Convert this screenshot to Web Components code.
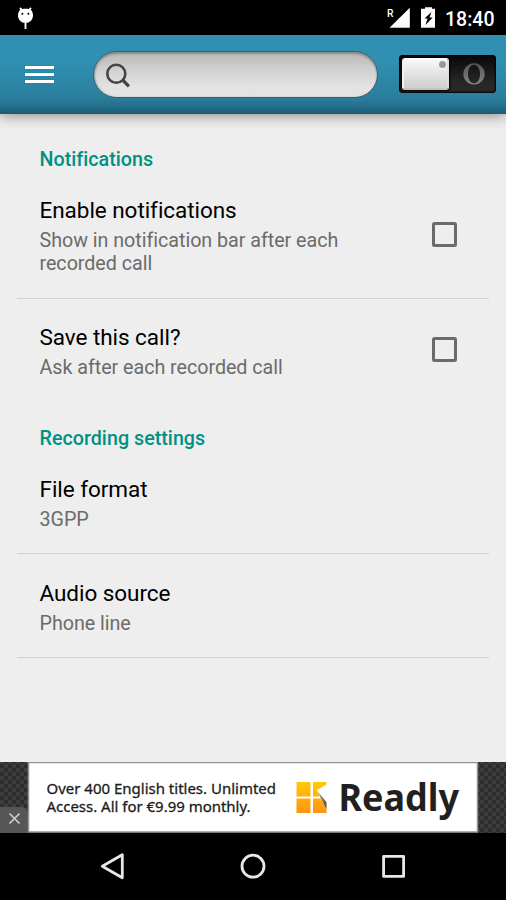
<!DOCTYPE html>
<html lang="en">
<head>
<meta charset="utf-8">
<title>Call recorder settings</title>
<style>
html,body{margin:0;padding:0;height:100%;overflow:hidden;background:#eee;font-family:Roboto,"Noto Sans",sans-serif}
</style>
</head>
<body>
<settings-screen></settings-screen>
<script>
function define(name, html) {
  const t = document.createElement('template');
  t.innerHTML = html;
  customElements.define(name, class extends HTMLElement {
    constructor() {
      super();
      this.attachShadow({mode: 'open'}).append(t.content.cloneNode(true));
    }
  });
}

define('status-bar', `
<style>
:host{display:flex;box-sizing:border-box;height:35px;padding:0 4px 0 16px;background:#000;color:#fff;justify-content:space-between;flex:none}
.right{display:flex}
svg{display:block}
</style>
<svg width="20" height="35" viewBox="16 0 20 35" fill="#fff">
  <path d="M20 8l2.200 2.400M31 8l-2.200 2.400M25.500 23v6" stroke="#fff" stroke-width="1.900" fill="none"/>
  <path d="M18 15.500C18 10 21 8.700 25.500 8.700S33 10 33 15.500C33 20 29.500 23 25.500 23S18 20 18 15.500z"/>
  <circle cx="22.400" cy="13.700" r="1" fill="#000"/><circle cx="28.400" cy="13.700" r="1" fill="#000"/>
</svg>
<div class="right">
<svg width="120" height="35" viewBox="382 0 120 35" fill="#fff">
  <text x="387" y="16.800" font-family="Roboto,sans-serif" font-size="11.500" font-weight="500" textLength="6.500" lengthAdjust="spacingAndGlyphs">R</text>
  <path d="M389.500 27.700L409.800 7.800V27.700z"/>
  <path d="M425 7.200h7v1.600h3v18.900h-14V8.800h4z"/>
  <path d="M431.500 12l-7 6.500h3l-2 6.500 7.200-7.500h-3.200z" fill="#000"/>
  <text x="445" y="25.500" font-family="Roboto,sans-serif" font-size="20" font-weight="500" textLength="49.500" lengthAdjust="spacingAndGlyphs">18:40</text>
</svg>
</div>`);

define('search-field', `
<style>
:host{display:flex;align-items:center;box-sizing:border-box;width:285px;height:47px;border-radius:24px;border:1.500px solid #3f5e6b;
background:linear-gradient(#b8b8b8,#d0d0d0 38%,#e2e2e2 75%,#e4e4e4);box-shadow:inset 0 2px 2px #6668,inset 1px 0 2px #6665}
svg{display:block;margin-left:10px}
</style>
<svg width="28" height="28" viewBox="0 0 28 28" fill="none" stroke="#444"><circle cx="12.300" cy="12.700" r="9" stroke-width="2.600"/><path d="M18.600 19l6.300 6.300" stroke-width="3.200"/></svg>`);

define('power-switch', `
<style>
:host{display:flex;box-sizing:border-box;width:97px;height:38px;padding:3px;border-radius:4px;background:linear-gradient(#080808,#262626 70%,#292929);box-shadow:inset 0 0 2px 1px #000}
.thumb{box-sizing:border-box;width:47px;height:32px;border:2px solid;border-color:#fff #dedede #c5c5c5 #f2f2f2;border-radius:3px;background:linear-gradient(#f7f7f7,#cfcfcf);display:flex;justify-content:flex-end;box-shadow:0 0 2px 1px #000}
.dot{width:7px;height:7px;border-radius:50%;background:#9b9797;margin:1px 1px 0 0;box-shadow:0 0 0 1px #f4f4f4}
svg{display:block;margin-left:14px}
</style>
<div class="thumb"><div class="dot"></div></div>
<svg width="23" height="32" viewBox="0 0 23 32"><defs><linearGradient id="g" x2="0" y2="1"><stop stop-color="#555"/><stop offset="1" stop-color="#858585"/></linearGradient></defs><path fill="url(#g)" fill-rule="evenodd" d="M11 5.200a10.700 10.700 0 1 0 .01 0zM11 6.700c8 0 8 18.600 0 18.600s-8-18.600 0-18.600z"/></svg>`);

define('app-bar', `
<style>
:host{display:flex;flex:none;box-sizing:border-box;height:78.500px;padding:0 10px 0 25px;
background:linear-gradient(#318fb1,#318fb1 35%,#2a7e9c 80%,#266f8c 90%,#17637c 97%,#35505c);box-shadow:0 1px 13px #0007;position:relative}
.menu{width:30px;height:18px;margin-top:31px;display:flex;flex-direction:column;gap:4px}
.menu i{height:3px;width:29px;background:#fff;box-shadow:0 0 0 1px #1785a655}
search-field{margin:16px 0 0 38px}
power-switch{margin:20px 0 0 auto}
</style>
<div class="menu"><i></i><i></i><i></i></div><search-field></search-field><power-switch></power-switch>`);

define('pref-category', `
<style>
:host{display:block;height:24px;line-height:24px;padding:24.200px 0 0 22.500px;font-size:19.700px;font-weight:500;color:#009184;letter-spacing:.02px}
</style><slot></slot>`);

define('pref-check', `
<style>
:host{display:block;box-sizing:border-box;width:25px;height:25px;border:3px solid #6b6b6b;border-radius:2.500px;margin-bottom:4px}
</style>`);

define('pref-item', `
<style>
:host{display:flex;box-sizing:border-box;align-items:center;justify-content:space-between;padding:25.500px 32px 22.300px 22.500px;border-bottom:1px solid #d2d2d2}
:host([plain]){border-bottom-color:transparent}
.text{width:320px}
.title{font-size:22.500px;line-height:27px;color:#000;letter-spacing:-.05px}
.sub{font-size:19.700px;line-height:23px;color:#6b6b6b;padding-top:5px;letter-spacing:-.03px}
</style>
<div class="text"><div class="title"><slot name="title"></slot></div><div class="sub"><slot></slot></div></div><slot name="control"></slot>`);

define('ad-banner', `
<style>
:host{display:flex;flex:none;height:71px;background:#333}
svg{display:block}
</style>
<svg width="506" height="71" viewBox="0 762 506 71">
  <defs>
    <pattern id="h" width="8" height="8" patternUnits="userSpaceOnUse"><rect width="8" height="8" fill="#2c2c2c"/><g fill="#3d3d3d"><circle cx="2" cy="2" r="2.400"/><circle cx="6" cy="6" r="2.400"/></g></pattern>
    <linearGradient id="o" gradientUnits="userSpaceOnUse" x1="0" y1="781" x2="0" y2="813"><stop stop-color="#ffcb08"/><stop offset="1" stop-color="#ff9412"/></linearGradient>
    <linearGradient id="s" x1="0" y1="1" x2="0" y2="0"><stop stop-color="#4f4020"/><stop offset=".6" stop-color="#8f8060"/><stop offset="1" stop-color="#e8dfc8"/></linearGradient>
  </defs>
  <rect y="762" width="506" height="71" fill="url(#h)"/>
  <path d="M0 807h20q8 0 8 8v18H0z" fill="#565656"/>
  <path d="M9.500 813.500l10 10M19.500 813.500l-10 10" stroke="#d0d0d0" stroke-width="1.600"/>
  <rect x="28.500" y="762.500" width="449" height="69.500" fill="#fff" stroke="#929292" stroke-width="1.500"/>
  <g font-family="'Noto Sans','Open Sans',sans-serif" fill="#1c1c1c" stroke="#1c1c1c" stroke-width=".3" font-size="15.200">
    <text x="46.500" y="794.300" textLength="229.500" lengthAdjust="spacingAndGlyphs">Over 400 English titles. Unlimted</text>
    <text x="46.500" y="812.300" textLength="204" lengthAdjust="spacingAndGlyphs">Access. All for €9.99 monthly.</text>
  </g>
  <path fill="url(#o)" d="M296.500 782h14v14.500h-14zM296.500 798.500h14v14.500h-14zM313 782h13.500v2.500L317 790l2.500 6.500H313zM313 798.500h7.500l6 9.500v5H313z"/>
  <path d="M316.500 790l10 19V802z" fill="url(#s)"/>
  <text x="338.500" y="811" font-family="'Noto Sans','Open Sans',sans-serif" font-weight="700" font-size="37" fill="#231f20" textLength="120.500" lengthAdjust="spacingAndGlyphs">Readly</text>
</svg>`);

define('nav-bar', `
<style>
:host{display:flex;flex:none;height:67px;background:#000;align-items:center;justify-content:space-between;padding:0 99px 0 99px}
svg{display:block}
</style>
<svg width="28" height="28" viewBox="0 0 28 28" fill="none" stroke="#e8e8e8" stroke-width="2.800" stroke-linejoin="round"><path d="M3.300 13.200L23.300 1.800v23z"/></svg>
<svg width="28" height="28" viewBox="0 0 28 28" fill="none" stroke="#e8e8e8" stroke-width="2.800"><circle cx="14" cy="13.200" r="11"/></svg>
<svg width="28" height="28" viewBox="0 0 28 28" fill="none" stroke="#e8e8e8" stroke-width="2.800" stroke-linejoin="round"><rect x="4.600" y="3.400" width="20" height="20"/></svg>`);

define('settings-screen', `
<style>
:host{display:flex;flex-direction:column;height:900px;width:506px;background:#eee;overflow:hidden}
main{flex:1;padding:10.200px 17px 0}
</style>
<status-bar></status-bar>
<app-bar></app-bar>
<main>
<pref-category>Notifications</pref-category>
<pref-item><span slot="title">Enable notifications</span>Show in notification bar after each recorded call<pref-check slot="control"></pref-check></pref-item>
<pref-item plain><span slot="title">Save this call?</span>Ask after each recorded call<pref-check slot="control"></pref-check></pref-item>
<pref-category>Recording settings</pref-category>
<pref-item><span slot="title">File format</span>3GPP</pref-item>
<pref-item><span slot="title">Audio source</span>Phone line</pref-item>
</main>
<ad-banner></ad-banner>
<nav-bar></nav-bar>`);
</script>
</body>
</html>
